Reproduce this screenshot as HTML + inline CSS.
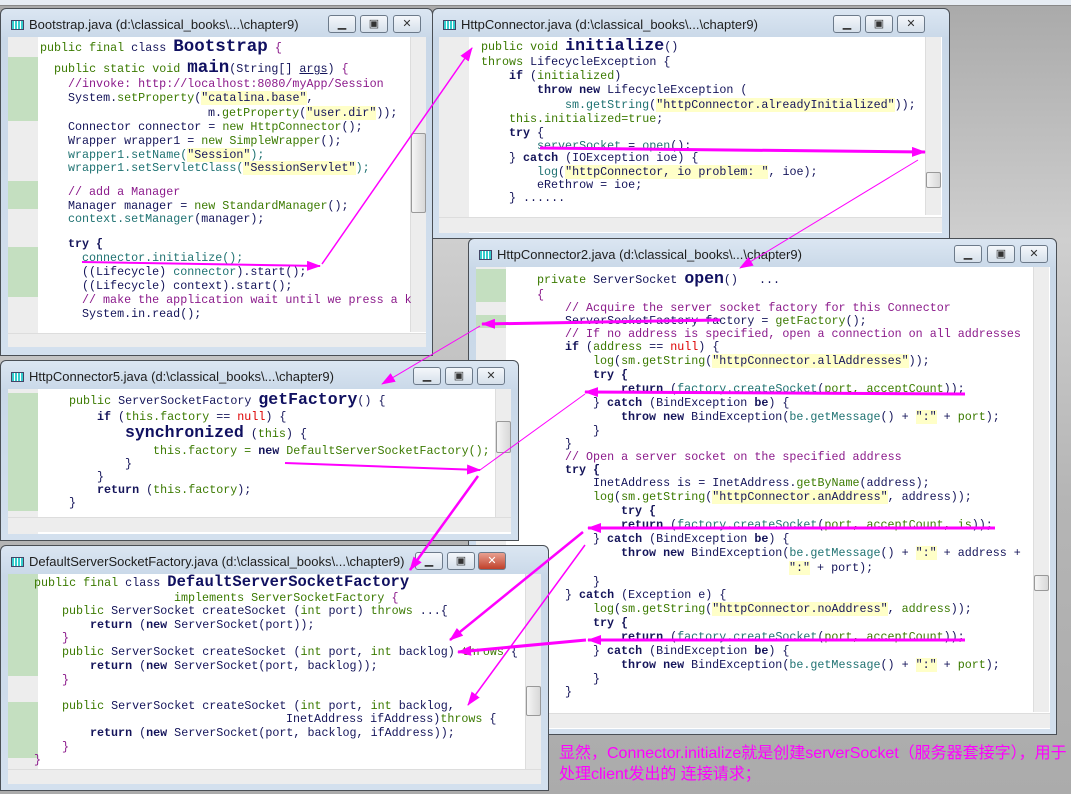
<!DOCTYPE html>
<html><head><meta charset="utf-8"><style>
*{margin:0;padding:0;box-sizing:border-box}
body{width:1071px;height:794px;overflow:hidden;position:relative;background:linear-gradient(#a9a9a9 0px,#cfcfcf 240px,#b5b5b5 500px,#ababab 794px);font-family:"Liberation Mono",monospace}
.top{position:absolute;left:0;top:0;width:1071px;height:6px;background:#e6ecf3;border-bottom:1px solid #888}
.w{position:absolute;background:linear-gradient(#dbe6f2,#c9d8e8 30px,#d3e0ee);border:1px solid #4a4f55;border-radius:6px 6px 0 0;overflow:hidden}
.t{position:absolute;left:10px;top:8px;font:13px "Liberation Sans",sans-serif;color:#1e1e1e;white-space:nowrap}
.t i{display:inline-block;width:13px;height:10px;border:1px solid #446;background:repeating-linear-gradient(90deg,#3cc 0 2px,#fff 2px 3px);margin-right:5px;vertical-align:-1px}
.btn{position:absolute;top:6px;width:28px;height:18px;border:1px solid #6c7a8a;border-radius:3px;background:linear-gradient(#f4f7fb,#d6e0eb);font:11px "Liberation Sans";text-align:center;line-height:16px;color:#333}
.bd{position:absolute;background:#fff;overflow:hidden}
.g{position:absolute;left:0;width:30px;background:#ededed}
.gg{position:absolute;left:0;width:30px;background:#c4dfc0}
.l{position:absolute;white-space:pre;font-size:11.7px;line-height:14px;color:#14145a}
.k{color:#3b7a00}.c{color:#8b1a8b}.m{color:#1f7272}.s{background:#ffffc8;color:#14145a}.kb{color:#14145a;font-weight:bold}.r{color:#d00}
.B{font-weight:bold;font-size:16.5px;color:#101060}
.vs{position:absolute;width:16px;background:#ededed;border-left:1px solid #ddd}
.hs{position:absolute;height:15px;background:#ededed;border-top:1px solid #ddd}
.th{position:absolute;background:linear-gradient(90deg,#f5f5f5,#d8d8d8);border:1px solid #999;border-radius:2px}
.cn{position:absolute;font:16px "Liberation Sans","Noto Sans CJK SC",sans-serif;color:#f0f;white-space:nowrap}
</style></head><body>
<div class="top"></div>

<div class="w" style="left:432px;top:8px;width:518px;height:231px">
<div class="t"><i></i>HttpConnector.java (d:\classical_books\...\chapter9)</div>
<div class="btn" style="left:400px">▁</div><div class="btn" style="left:432px">▣</div><div class="btn" style="left:464px">✕</div>
<div class="bd" style="left:6px;top:28px;width:503px;height:196px">
<div class="g" style="top:0;height:196px"></div>
<div class="vs" style="left:486px;top:0;height:178px"></div><div class="th" style="left:487px;top:135px;width:15px;height:16px"></div>
<div class="hs" style="left:0;top:180px;width:503px"></div>
</div>
<div class="l" style="left:48px;top:30px"><span class="k">public void</span> <span class="B">initialize</span>()</div>
<div class="l" style="left:48px;top:46px"><span class="k">throws</span> LifecycleException {</div>
<div class="l" style="left:76px;top:60px"><span class="kb">if</span> (<span class="k">initialized</span>)</div>
<div class="l" style="left:104px;top:74px"><span class="kb">throw new</span> LifecycleException (</div>
<div class="l" style="left:132px;top:89px"><span class="m">sm.getString</span>(<span class="s">"httpConnector.alreadyInitialized"</span>));</div>
<div class="l" style="left:76px;top:103px"><span class="k">this.initialized=true</span>;</div>
<div class="l" style="left:76px;top:117px"><span class="kb">try</span> {</div>
<div class="l" style="left:104px;top:130px"><span class="m">serverSocket</span> = <span class="m">open</span>();</div>
<div class="l" style="left:76px;top:142px">} <span class="kb">catch</span> (IOException ioe) {</div>
<div class="l" style="left:104px;top:156px"><span class="m">log</span>(<span class="s">"httpConnector, io problem: "</span>, ioe);</div>
<div class="l" style="left:104px;top:169px">eRethrow = ioe;</div>
<div class="l" style="left:76px;top:182px">} ......</div>
</div>

<div class="w" style="left:0;top:8px;width:433px;height:348px">
<div class="t"><i></i>Bootstrap.java (d:\classical_books\...\chapter9)</div>
<div class="btn" style="left:327px">▁</div><div class="btn" style="left:359px">▣</div><div class="btn" style="left:392px">✕</div>
<div class="bd" style="left:7px;top:28px;width:418px;height:310px">
<div class="g" style="top:0;height:310px"></div>
<div class="gg" style="top:20px;height:64px"></div><div class="gg" style="top:144px;height:28px"></div><div class="gg" style="top:210px;height:50px"></div>
<div class="vs" style="left:402px;top:0;height:295px"></div><div class="th" style="left:403px;top:96px;width:15px;height:80px"></div>
<div class="hs" style="left:0;top:296px;width:418px"></div>
</div>
<div class="l" style="left:39px;top:31px"><span class="k">public final</span> class <span class="B" style="font-size:17.5px">Bootstrap</span> <span class="c">{</span></div>
<div class="l" style="left:53px;top:52px"><span class="k">public static void</span> <span class="B" style="font-size:17.5px">main</span>(String[] <u>args</u>) <span class="c">{</span></div>
<div class="l c" style="left:67px;top:68px">//invoke: http://localhost:8080/myApp/Session</div>
<div class="l" style="left:67px;top:82px">System.<span class="k">setProperty</span>(<span class="s">"catalina.base"</span>,</div>
<div class="l" style="left:207px;top:97px">m.<span class="k">getProperty</span>(<span class="s">"user.dir"</span>));</div>
<div class="l" style="left:67px;top:111px">Connector connector = <span class="k">new HttpConnector</span>();</div>
<div class="l" style="left:67px;top:125px">Wrapper wrapper1 = <span class="k">new SimpleWrapper</span>();</div>
<div class="l m" style="left:67px;top:139px">wrapper1.setName(<span class="s">"Session"</span>);</div>
<div class="l m" style="left:67px;top:152px">wrapper1.setServletClass(<span class="s">"SessionServlet"</span>);</div>
<div class="l c" style="left:67px;top:176px">// add a Manager</div>
<div class="l" style="left:67px;top:190px">Manager manager = <span class="k">new StandardManager</span>();</div>
<div class="l" style="left:67px;top:203px"><span class="m">context.setManager</span>(manager);</div>
<div class="l kb" style="left:67px;top:228px">try {</div>
<div class="l m" style="left:81px;top:242px">connector.initialize();</div>
<div class="l" style="left:81px;top:256px">((Lifecycle) <span class="m">connector</span>).start();</div>
<div class="l" style="left:81px;top:270px">((Lifecycle) context).start();</div>
<div class="l c" style="left:81px;top:284px">// make the application wait until we press a k</div>
<div class="l" style="left:81px;top:298px">System.in.read();</div>
</div>

<div class="w" style="left:468px;top:238px;width:589px;height:497px">
<div class="t"><i></i>HttpConnector2.java (d:\classical_books\...\chapter9)</div>
<div class="btn" style="left:485px">▁</div><div class="btn" style="left:518px">▣</div><div class="btn" style="left:551px">✕</div>
<div class="bd" style="left:7px;top:28px;width:574px;height:462px">
<div class="g" style="top:0;height:462px"></div>
<div class="gg" style="top:2px;height:33px"></div><div class="gg" style="top:48px;height:13px"></div>
<div class="vs" style="left:557px;top:0;height:445px"></div><div class="th" style="left:558px;top:308px;width:15px;height:16px"></div>
<div class="hs" style="left:0;top:446px;width:574px"></div>
</div>
<div class="l" style="left:68px;top:33px"><span class="k">private</span> ServerSocket <span class="B">open</span>()   ...</div>
<div class="l c" style="left:68px;top:49px">{</div>
<div class="l c" style="left:96px;top:62px">// Acquire the server socket factory for this Connector</div>
<div class="l" style="left:96px;top:75px">ServerSocketFactory factory = <span class="k">getFactory</span>();</div>
<div class="l c" style="left:96px;top:88px">// If no address is specified, open a connection on all addresses</div>
<div class="l" style="left:96px;top:101px"><span class="kb">if</span> (<span class="k">address</span> == <span class="r">null</span>) {</div>
<div class="l" style="left:124px;top:115px"><span class="k">log</span>(<span class="k">sm.getString</span>(<span class="s">"httpConnector.allAddresses"</span>));</div>
<div class="l kb" style="left:124px;top:129px">try {</div>
<div class="l" style="left:152px;top:143px"><span class="kb">return</span> (<span class="m">factory.createSocket</span>(<span class="k">port, acceptCount</span>));</div>
<div class="l" style="left:124px;top:157px">} <span class="kb">catch</span> (BindException <span class="kb">be</span>) {</div>
<div class="l" style="left:152px;top:171px"><span class="kb">throw new</span> BindException(<span class="m">be.getMessage</span>() + <span class="s">":"</span> + <span class="k">port</span>);</div>
<div class="l" style="left:124px;top:185px">}</div>
<div class="l" style="left:96px;top:198px">}</div>
<div class="l c" style="left:96px;top:211px">// Open a server socket on the specified address</div>
<div class="l kb" style="left:96px;top:224px">try {</div>
<div class="l" style="left:124px;top:237px">InetAddress is = InetAddress.<span class="k">getByName</span>(address);</div>
<div class="l" style="left:124px;top:251px"><span class="k">log</span>(<span class="k">sm.getString</span>(<span class="s">"httpConnector.anAddress"</span>, address));</div>
<div class="l kb" style="left:152px;top:265px">try {</div>
<div class="l" style="left:152px;top:279px"><span class="kb">return</span> (<span class="m">factory.createSocket</span>(<span class="k">port, acceptCount, is</span>));</div>
<div class="l" style="left:124px;top:293px">} <span class="kb">catch</span> (BindException <span class="kb">be</span>) {</div>
<div class="l" style="left:152px;top:307px"><span class="kb">throw new</span> BindException(<span class="m">be.getMessage</span>() + <span class="s">":"</span> + address +</div>
<div class="l" style="left:320px;top:322px"><span class="s">":"</span> + port);</div>
<div class="l" style="left:124px;top:336px">}</div>
<div class="l" style="left:96px;top:349px">} <span class="kb">catch</span> (Exception e) {</div>
<div class="l" style="left:124px;top:363px"><span class="k">log</span>(<span class="k">sm.getString</span>(<span class="s">"httpConnector.noAddress"</span>, <span class="k">address</span>));</div>
<div class="l kb" style="left:124px;top:377px">try {</div>
<div class="l" style="left:152px;top:391px"><span class="kb">return</span> (<span class="m">factory.createSocket</span>(<span class="k">port, acceptCount</span>));</div>
<div class="l" style="left:124px;top:405px">} <span class="kb">catch</span> (BindException <span class="kb">be</span>) {</div>
<div class="l" style="left:152px;top:419px"><span class="kb">throw new</span> BindException(<span class="m">be.getMessage</span>() + <span class="s">":"</span> + <span class="k">port</span>);</div>
<div class="l" style="left:124px;top:433px">}</div>
<div class="l" style="left:96px;top:446px">}</div>
</div>

<div class="w" style="left:0;top:360px;width:519px;height:181px">
<div class="t"><i></i>HttpConnector5.java (d:\classical_books\...\chapter9)</div>
<div class="btn" style="left:412px">▁</div><div class="btn" style="left:444px">▣</div><div class="btn" style="left:476px">✕</div>
<div class="bd" style="left:7px;top:28px;width:503px;height:145px">
<div class="g" style="top:0;height:145px"></div>
<div class="gg" style="top:4px;height:118px"></div>
<div class="vs" style="left:487px;top:0;height:128px"></div><div class="th" style="left:488px;top:32px;width:15px;height:32px"></div>
<div class="hs" style="left:0;top:128px;width:503px"></div>
</div>
<div class="l" style="left:68px;top:32px"><span class="k">public</span> ServerSocketFactory <span class="B">getFactory</span>() {</div>
<div class="l" style="left:96px;top:49px"><span class="kb">if</span> (<span class="k">this.factory</span> == <span class="r">null</span>) {</div>
<div class="l" style="left:124px;top:65px"><span class="B">synchronized</span> (<span class="k">this</span>) {</div>
<div class="l k" style="left:152px;top:83px">this.factory = <span class="kb">new</span> DefaultServerSocketFactory();</div>
<div class="l" style="left:124px;top:96px">}</div>
<div class="l" style="left:96px;top:109px">}</div>
<div class="l" style="left:96px;top:122px"><span class="kb">return</span> (<span class="k">this.factory</span>);</div>
<div class="l" style="left:68px;top:135px">}</div>
</div>

<div class="w" style="left:0;top:545px;width:549px;height:246px">
<div class="t"><i></i>DefaultServerSocketFactory.java (d:\classical_books\...\chapter9)</div>
<div class="btn" style="left:414px">▁</div><div class="btn" style="left:446px">▣</div><div class="btn" style="left:477px;background:linear-gradient(#e8a090,#c0402a);color:#fff">✕</div>
<div class="bd" style="left:7px;top:28px;width:533px;height:210px">
<div class="g" style="top:0;height:210px"></div>
<div class="gg" style="top:0;height:102px"></div><div class="gg" style="top:128px;height:56px"></div>
<div class="vs" style="left:517px;top:0;height:195px"></div><div class="th" style="left:518px;top:112px;width:15px;height:30px"></div>
<div class="hs" style="left:0;top:195px;width:533px"></div>
</div>
<div class="l" style="left:33px;top:29px"><span class="k">public final</span> class <span class="B" style="font-size:15.5px">DefaultServerSocketFactory</span></div>
<div class="l k" style="left:173px;top:45px">implements ServerSocketFactory <span class="c">{</span></div>
<div class="l" style="left:61px;top:58px"><span class="k">public</span> ServerSocket createSocket (<span class="k">int</span> port) <span class="k">throws</span> ...{</div>
<div class="l" style="left:89px;top:72px"><span class="kb">return</span> (<span class="kb">new</span> ServerSocket(port));</div>
<div class="l c" style="left:61px;top:85px">}</div>
<div class="l" style="left:61px;top:99px"><span class="k">public</span> ServerSocket createSocket (<span class="k">int</span> port, <span class="k">int</span> backlog) <span class="k">throws</span> {</div>
<div class="l" style="left:89px;top:113px"><span class="kb">return</span> (<span class="kb">new</span> ServerSocket(port, backlog));</div>
<div class="l c" style="left:61px;top:127px">}</div>
<div class="l" style="left:61px;top:153px"><span class="k">public</span> ServerSocket createSocket (<span class="k">int</span> port, <span class="k">int</span> backlog,</div>
<div class="l" style="left:285px;top:166px">InetAddress ifAddress)<span class="k">throws</span> {</div>
<div class="l" style="left:89px;top:180px"><span class="kb">return</span> (<span class="kb">new</span> ServerSocket(port, backlog, ifAddress));</div>
<div class="l c" style="left:61px;top:194px">}</div>
<div class="l c" style="left:33px;top:207px">}</div>
</div>

<div class="cn" style="left:559px;top:739px">显然，Connector.initialize就是创建serverSocket（服务器套接字），用于</div>
<div class="cn" style="left:559px;top:760px">处理client发出的 连接请求；</div>

<svg width="1071" height="794" style="position:absolute;left:0;top:0" viewBox="0 0 1071 794">
<defs><marker id="b" markerWidth="14" markerHeight="10" refX="13" refY="5" orient="auto" markerUnits="userSpaceOnUse"><path d="M0,0 L14,5 L0,10z" fill="#f0f"/></marker></defs>
<g stroke="#f0f" fill="none">
<path d="M82 262 L320 266" stroke-width="2" marker-end="url(#b)"/>
<path d="M322 264 L472 48" stroke-width="1.5" marker-end="url(#b)"/>
<path d="M540 148 L925 152" stroke-width="3" marker-end="url(#b)"/>
<path d="M918 160 L740 268" stroke-width="1" marker-end="url(#b)"/>
<path d="M720 320 L482 324" stroke-width="3" marker-end="url(#b)"/>
<path d="M480 326 L382 384" stroke-width="1" marker-end="url(#b)"/>
<path d="M965 394 L585 392" stroke-width="3" marker-end="url(#b)"/>
<path d="M585 394 L480 470" stroke-width="1"/>
<path d="M285 463 L480 470" stroke-width="2" marker-end="url(#b)"/>
<path d="M478 476 L410 570" stroke-width="2.5" marker-end="url(#b)"/>
<path d="M995 528 L588 528" stroke-width="3" marker-end="url(#b)"/>
<path d="M583 532 L450 640" stroke-width="2.5" marker-end="url(#b)"/>
<path d="M965 640 L588 640" stroke-width="3" marker-end="url(#b)"/>
<path d="M586 640 L458 652" stroke-width="3" marker-end="url(#b)"/>
<path d="M585 545 L468 705" stroke-width="1.5" marker-end="url(#b)"/>
</g></svg>
</body></html>
